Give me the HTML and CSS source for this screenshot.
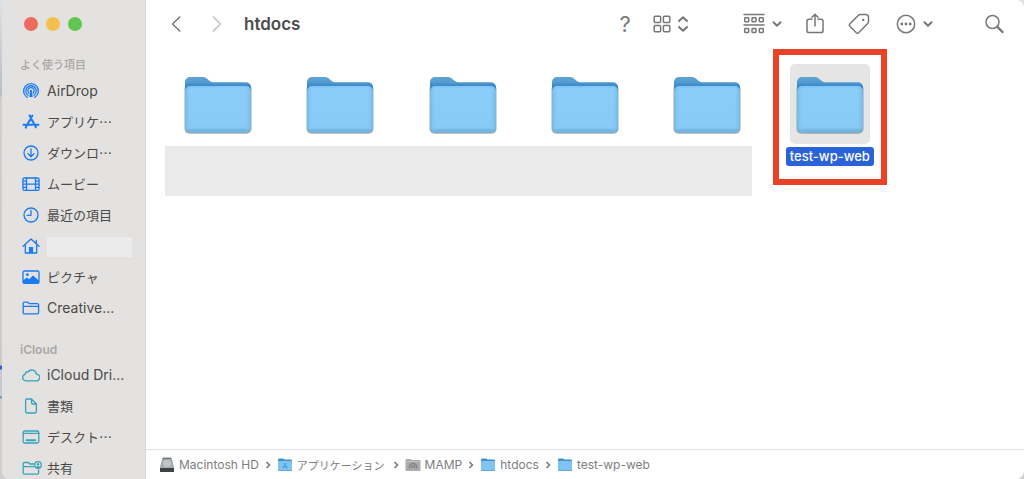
FILE: index.html
```html
<!DOCTYPE html>
<html lang="ja">
<head>
<meta charset="utf-8">
<title>htdocs</title>
<link rel="stylesheet" href="styles.css">
</head>
<body>
<svg class="defs" aria-hidden="true">
  <defs>
    <linearGradient id="back" x1="0" y1="0" x2="0" y2="1"><stop offset="0" stop-color="#5fa3d4"/><stop offset="0.18" stop-color="#549dd2"/><stop offset="0.34" stop-color="#3683c6"/></linearGradient>
    <linearGradient id="front" x1="0" y1="0" x2="0" y2="1"><stop offset="0" stop-color="#80c5f2"/><stop offset="0.08" stop-color="#8acdf8"/><stop offset="0.87" stop-color="#88cbf6"/><stop offset="0.9" stop-color="#78bdea"/><stop offset="1" stop-color="#6db3e2"/></linearGradient>
    <linearGradient id="edge"><stop offset="0" stop-color="#5fa9db" stop-opacity=".55"/><stop offset="0.1" stop-color="#88cbf6" stop-opacity="0"/><stop offset="0.9" stop-color="#88cbf6" stop-opacity="0"/><stop offset="1" stop-color="#5fa9db" stop-opacity=".55"/></linearGradient>
    <symbol id="folder" viewBox="0 0 70 60">
      <rect x="1.500" y="9" width="67" height="49.700" rx="5" fill="#7d878d" opacity=".7"/>
      <path d="M2 7a5 5 0 0 1 5-5h13c4 0 6 5 10 5.300h33a5 5 0 0 1 5 5V30H2z" fill="url(#back)"/>
      <path d="M2 16a5 5 0 0 1 5-5h56a5 5 0 0 1 5 5v36.500a5 5 0 0 1-5 5H7a5 5 0 0 1-5-5z" fill="url(#front)"/>
      <path d="M2 16a5 5 0 0 1 5-5h56a5 5 0 0 1 5 5v36.500a5 5 0 0 1-5 5H7a5 5 0 0 1-5-5z" fill="url(#edge)"/>
      <path d="M3 53h64" stroke="#a3d8f8" stroke-width="1" opacity=".6"/>
    </symbol>
    <symbol id="small-folder" viewBox="0 0 16 16">
      <path d="M1 2.500a1 1 0 0 1 1-1h4l1.500 1H14a1 1 0 0 1 1 1V8H1z" fill="#3f8fce"/>
      <path d="M1 4h14v9a1 1 0 0 1-1 1H2a1 1 0 0 1-1-1z" fill="#7fc4f1"/>
      <path d="M1.300 13.500h13.400" stroke="#65a9d8"/>
    </symbol>
    <symbol id="down" viewBox="0 0 10 10"><path d="M1.500 3.300 5 6.800l3.500-3.500" class="heavy"/></symbol>
    <symbol id="sep" viewBox="0 0 6 8"><path d="M1.500 1 4.500 4l-3 3" class="sep-line"/></symbol>
  </defs>
</svg>
<div class="desktop">
  <div class="window">
    <aside class="sidebar">
      <div class="lights">
        <button class="light red" aria-label="閉じる"></button>
        <button class="light yellow" aria-label="しまう"></button>
        <button class="light green" aria-label="拡大"></button>
      </div>
      <nav>
        <h2 class="heading ja-heading">よく使う項目</h2>
        <ul class="places">
          <li><a href="#" class="place"><svg class="icon" viewBox="0 0 18 18"><path d="M5.200 15.400a7.400 7.400 0 1 1 7.600 0M6 13.200a5.200 5.200 0 1 1 6 0M7.100 11.200a3.100 3.100 0 1 1 3.800 0"/><path class="solid" d="M9 7.800a1.300 1.300 0 0 1 .8 2.300l1 4.800H7.200l1-4.800A1.300 1.300 0 0 1 9 7.800z"/></svg><span>AirDrop</span></a></li>
          <li><a href="#" class="place"><svg class="icon thick" viewBox="0 0 18 18"><path d="M7.600 2.500 13.900 14.300M10.400 2.500 5.500 11.300M1.500 11.800h9M13 11.800h3.500M4.400 13.400l-.7 1.300"/></svg><span class="ja">アプリケ…</span></a></li>
          <li><a href="#" class="place"><svg class="icon" viewBox="0 0 18 18"><circle cx="9" cy="9" r="7"/><path d="M9 5v7.500M6 9.700l3 3 3-3"/></svg><span class="ja">ダウンロ…</span></a></li>
          <li><a href="#" class="place"><svg class="icon" viewBox="0 0 18 18"><rect x="1" y="3" width="16" height="12.400" rx="1.300"/><path d="M4.500 3v12.400M13.500 3v12.400M4.500 9.200h9M1 6.100h3.500M1 9.200h3.500M1 12.300h3.500M13.500 6.100H17M13.500 9.200H17M13.500 12.300H17"/></svg><span class="ja">ムービー</span></a></li>
          <li><a href="#" class="place"><svg class="icon" viewBox="0 0 18 18"><circle cx="9" cy="9" r="7"/><path d="M9 4.300V9.300H5"/></svg><span class="ja">最近の項目</span></a></li>
          <li><a href="#" class="place" aria-label="ホーム"><svg class="icon" viewBox="0 0 18 18"><path d="M1 9.200 9 2l8 7.200M3.300 8v8h11.400V8M14.300 6.500V3.300"/><path class="solid" d="M6.900 10h4.200v6H6.900z"/></svg><span class="redacted"></span></a></li>
          <li><a href="#" class="place"><svg class="icon" viewBox="0 0 18 18"><rect x="1" y="3" width="16" height="12.400" rx="1.500"/><path class="solid" d="M1 12.500 4.800 9.500l2.200 1.800 4-3.800 6 5v2.800H1z"/><circle class="solid" cx="5.400" cy="6.700" r="1.400"/></svg><span class="ja">ピクチャ</span></a></li>
          <li><a href="#" class="place"><svg class="icon" viewBox="0 0 18 18"><path d="M1.200 13.500V4.500a1.300 1.300 0 0 1 1.300-1.300h3.300l1.500 1.500h8a1.300 1.300 0 0 1 1.300 1.300v7.500a1.300 1.300 0 0 1-1.300 1.300H2.500a1.300 1.300 0 0 1-1.300-1.300zM1.200 7.300h15.400"/></svg><span>Creative...</span></a></li>
        </ul>
        <h2 class="heading cloud-heading">iCloud</h2>
        <ul class="places teal">
          <li><a href="#" class="place"><svg class="icon" viewBox="0 0 18 18"><path d="M3.800 14.800a3.300 3.300 0 0 1-.6-6.500 2.500 2.500 0 0 1 3-2.500 4.600 4.600 0 0 1 8.200 2.400 3.300 3.300 0 0 1 .2 6.600z"/></svg><span>iCloud Dri...</span></a></li>
          <li><a href="#" class="place"><svg class="icon" viewBox="0 0 18 18"><path d="M9.500 2H5a1.400 1.400 0 0 0-1.400 1.400v11.200A1.400 1.400 0 0 0 5 16h8a1.400 1.400 0 0 0 1.400-1.400V7zM9.500 2v3.600A1.400 1.400 0 0 0 10.900 7h3.500"/></svg><span class="ja">書類</span></a></li>
          <li><a href="#" class="place"><svg class="icon" viewBox="0 0 18 18"><rect x="1.200" y="3" width="15.600" height="12" rx="1.500"/><path d="M1.200 5.400h15.600"/><path class="bar" d="M4.700 12.200h8.600"/></svg><span class="ja">デスクト…</span></a></li>
          <li><a href="#" class="place"><svg class="icon shared" viewBox="0 0 20 18"><path d="M11.500 5H7.800L6.300 3.500H2.500A1.300 1.300 0 0 0 1.200 4.800v9a1.300 1.300 0 0 0 1.300 1.300h12.800a1.300 1.300 0 0 0 1.300-1.300v-3M1.200 7.700h10.500"/><circle cx="16" cy="6" r="3.300"/><circle class="solid" cx="16" cy="5.200" r="1.200"/><path class="solid" d="M13.800 8.200q2.200-2.400 4.400 0L16 9.300z"/></svg><span class="ja">共有</span></a></li>
        </ul>
      </nav>
    </aside>
    <main class="main">
      <header class="toolbar">
        <button class="tool" aria-label="戻る"><svg class="nav-icon" viewBox="0 0 12 18"><path d="M9.800 2 2.500 9l7.300 7"/></svg></button>
        <button class="tool forward" aria-label="進む"><svg class="nav-icon" viewBox="0 0 12 18"><path d="M2.200 2 9.500 9l-7.300 7"/></svg></button>
        <h1 class="title">htdocs</h1>
        <button class="tool help">?</button>
        <button class="tool view" aria-label="表示"><svg class="i18" viewBox="0 0 18 18"><rect x="1.200" y="1.200" width="6.400" height="6.400" rx="1"/><rect x="10.400" y="1.200" width="6.400" height="6.400" rx="1"/><rect x="1.200" y="10.400" width="6.400" height="6.400" rx="1"/><rect x="10.400" y="10.400" width="6.400" height="6.400" rx="1"/></svg><svg class="updown" viewBox="0 0 10 18"><path class="heavy" d="M1 6l4-3.700L9 6M1 12l4 3.700L9 12"/></svg></button>
        <button class="tool arrange" aria-label="グループ"><svg class="i22" viewBox="0 0 22 22"><path d="M1 1.500h20M1 12h20"/><rect x="1.700" y="4.700" width="4" height="4" rx=".7"/><rect x="9" y="4.700" width="4" height="4" rx=".7"/><rect x="16.300" y="4.700" width="4" height="4" rx=".7"/><rect x="1.700" y="15.500" width="4" height="4" rx=".7"/><rect x="9" y="15.500" width="4" height="4" rx=".7"/><rect x="16.300" y="15.500" width="4" height="4" rx=".7"/></svg><svg class="chev"><use href="#down"/></svg></button>
        <button class="tool share" aria-label="共有"><svg class="i22" viewBox="0 0 22 22"><path d="M8 6.300H4.800A1.800 1.800 0 0 0 3 8.100v9.600a1.800 1.800 0 0 0 1.800 1.800h12.400a1.800 1.800 0 0 0 1.800-1.800V8.100a1.800 1.800 0 0 0-1.800-1.800H14M11 13V1.500M8 4.200 11 1.200l3 3"/></svg></button>
        <button class="tool tag" aria-label="タグ"><svg class="i22" viewBox="0 0 22 22"><path d="M12.500 1.500h5.200a2.800 2.800 0 0 1 2.800 2.800v4.200a2.800 2.800 0 0 1-.8 2l-9.100 9.300a1.600 1.600 0 0 1-2.300 0L1.800 13.300a1.600 1.600 0 0 1 0-2.300l8.700-8.700a2.800 2.800 0 0 1 2-.8z"/><circle class="solid" cx="15.200" cy="6.900" r="1.200"/></svg></button>
        <button class="tool more" aria-label="その他"><svg class="i20" viewBox="0 0 20 20"><circle cx="10" cy="10" r="8.700"/><circle class="solid" cx="5.800" cy="10" r="1.400"/><circle class="solid" cx="10" cy="10" r="1.400"/><circle class="solid" cx="14.200" cy="10" r="1.400"/></svg><svg class="chev"><use href="#down"/></svg></button>
        <button class="tool search" aria-label="検索"><svg class="i20" viewBox="0 0 20 20"><circle cx="8.500" cy="8" r="6.500"/><path class="handle" d="M13.200 12.700l5.300 5.300"/></svg></button>
      </header>
      <section class="files" aria-label="ファイル">
        <div class="cell"><svg class="folder"><use href="#folder"/></svg></div>
        <div class="cell"><svg class="folder"><use href="#folder"/></svg></div>
        <div class="cell"><svg class="folder"><use href="#folder"/></svg></div>
        <div class="cell"><svg class="folder"><use href="#folder"/></svg></div>
        <div class="cell"><svg class="folder"><use href="#folder"/></svg></div>
        <div class="cell chosen"><div class="thumb"><svg class="folder"><use href="#folder"/></svg></div><span class="name">test-wp-web</span><div class="frame"></div></div>
        <div class="mask"></div>
      </section>
      <footer class="path">
        <span class="crumb"><svg class="crumb-icon" viewBox="0 0 16 16"><path d="M3.500 1h9L15 11v3.500H1V11z" fill="#878b8d"/><path d="M3.500 1h9L15 11H1z" fill="#a6acae"/><path d="M1 11h14v3.500a.5.5 0 0 1-.5.500h-13a.5.5 0 0 1-.5-.500z" fill="#3d4246"/><ellipse cx="8" cy="6.500" rx="4" ry="3.500" fill="#c0c6c8"/><path d="M4 1.200h8" stroke="#55595c"/></svg>Macintosh HD</span>
        <svg class="sep"><use href="#sep"/></svg>
        <span class="crumb"><svg class="crumb-icon" viewBox="0 0 16 16"><use href="#small-folder"/><path d="M8.300 6 6 11.500M7.700 6l2.300 5.500M5.300 9.800h5.400" fill="none" stroke="#4b9ad4" stroke-width=".9"/></svg><span class="ja-crumb">アプリケーション</span></span>
        <svg class="sep"><use href="#sep"/></svg>
        <span class="crumb"><svg class="crumb-icon" viewBox="0 0 16 16"><path d="M.5 3a1 1 0 0 1 1-1h4L7 3h7.500a1 1 0 0 1 1 1v9a1 1 0 0 1-1 1h-13a1 1 0 0 1-1-1z" fill="#acacac"/><path d="M.5 4.500h15" stroke="#bebebe"/><path d="M4.500 11.500c-1-3 .8-5 3.500-5s4.500 2 3.500 5M6.500 11.500V9h3v2.500" fill="none" stroke="#858585" stroke-width="1.400"/></svg>MAMP</span>
        <svg class="sep"><use href="#sep"/></svg>
        <span class="crumb"><svg class="crumb-icon"><use href="#small-folder"/></svg>htdocs</span>
        <svg class="sep"><use href="#sep"/></svg>
        <span class="crumb"><svg class="crumb-icon"><use href="#small-folder"/></svg>test-wp-web</span>
      </footer>
    </main>
  </div>
</div>
</body>
</html>
```
FILE: styles.css
```css
* { box-sizing: border-box; }
body {
  margin: 0;
  font-family: Inter, "Noto Sans CJK JP", sans-serif;
  color: #4a4948;
}
.defs { position: absolute; width: 0; height: 0; }
.desktop {
  height: 100vh;
  display: flex;
  padding-left: 2px;
  background: linear-gradient(#dfe3e7 0, #b7bec5 95px, #cfcfcf 98px, #cbcbcb 365px, #2d62c9 366px, #2d62c9 369px, #c5c9d2 370px, #c5c9d2 396px, #4d77c8 397px, #cfcfcf 399px);
}
.window {
  flex: 1;
  display: flex;
  min-width: 0;
  overflow: hidden;
  border-radius: 8px;
  background: #fff;
}
.sidebar {
  flex: none;
  width: 144px;
  padding: 17px 0 0 18px;
  overflow: hidden;
  background: #e4e2e0;
  border-right: 1px solid #dad8d6;
}
.lights { display: flex; gap: 8px; padding-left: 4px; }
.light { width: 14px; height: 14px; padding: 0; border: 0; border-radius: 50%; }
.red { background: #ed6a5f; }
.yellow { background: #f5bf4f; }
.green { background: #61c554; }
.heading { margin: 0; font-size: 12px; line-height: 16px; font-weight: 600; color: #a9a7a5; }
.ja-heading { margin-top: 25px; font-family: "Noto Sans CJK JP", sans-serif; font-size: 11px; font-weight: 500; }
.cloud-heading { margin-top: 19px; }
.places { margin: 3px 0 0; padding: 0; list-style: none; }
.teal { margin-top: 1px; }
.place {
  display: flex;
  align-items: center;
  gap: 7px;
  height: 31px;
  padding-left: 2px;
  font-size: 14px;
  color: inherit;
  text-decoration: none;
  white-space: nowrap;
}
.ja { font-family: "Noto Sans CJK JP", sans-serif; font-size: 13px; }
.icon {
  flex: none;
  width: 18px;
  height: 18px;
  fill: none;
  stroke: #1a7af5;
  stroke-width: 1.3;
  stroke-linecap: round;
  stroke-linejoin: round;
}
.icon .solid { fill: #1a7af5; stroke: none; }
.thick { stroke-width: 2; }
.teal .icon { stroke: #36a3b8; }
.teal .icon .solid { fill: #36a3b8; }
.icon .bar { stroke-width: 2; }
.shared { width: 20px; margin-right: -2px; }
.redacted { width: 85px; height: 20px; margin-top: 2px; background: #ebebeb; }

.main { flex: 1; min-width: 0; display: flex; flex-direction: column; }
.toolbar {
  flex: none;
  display: flex;
  align-items: center;
  height: 48px;
  padding: 0 20px 0 24px;
}
.tool {
  flex: none;
  display: flex;
  align-items: center;
  gap: 7px;
  padding: 0;
  border: 0;
  background: none;
  font: inherit;
  color: #7a7a7a;
}
.tool svg { fill: none; stroke: #777; stroke-width: 1.5; stroke-linecap: round; stroke-linejoin: round; }
.tool svg .solid { fill: #777; stroke: none; }
.tool .handle { stroke-width: 2.4; }
.heavy { stroke-width: 2; }
.nav-icon { width: 12px; height: 18px; }
.forward { margin-left: 29px; }
.tool.forward svg { stroke: #c2c2c2; }
.title { flex: 1; margin: 0 0 0 21px; font-size: 17px; line-height: 24px; font-weight: 600; color: #4c4c4c; }
.help { width: 14px; justify-content: center; font-size: 22px; line-height: 24px; }
.view { margin-left: 21px; }
.arrange { margin-left: 55px; }
.share { margin-left: 22px; }
.tag { margin-left: 22px; }
.more { margin-left: 26px; }
.search { margin-left: 51px; }
.i18 { width: 18px; height: 18px; }
.i20 { width: 20px; height: 20px; }
.i22 { width: 22px; height: 22px; }
.updown { width: 10px; height: 18px; }
.chev { width: 10px; height: 10px; }

.files {
  flex: 1;
  display: grid;
  grid-template-columns: repeat(6, minmax(0, 1fr));
  grid-template-rows: 82px 50px;
  max-width: 745px;
  padding: 16px 0 0 11px;
}
.cell { display: flex; flex-direction: column; align-items: center; padding-top: 11px; }
.folder { flex: none; width: 70px; height: 60px; }
.chosen { position: relative; padding-top: 0; }
.thumb { flex: none; width: 80px; height: 80px; padding: 11px 5px; border-radius: 5px; background: #e5e5e5; }
.name {
  flex: none;
  margin-top: 3px;
  padding: 0 4px;
  border-radius: 3px;
  background: #2962d9;
  color: #fff;
  font-size: 13px;
  line-height: 19px;
  font-weight: 500;
  white-space: nowrap;
}
.frame { position: absolute; top: -15px; left: 4px; right: 4px; height: 136px; border: 6px solid #ea4127; }
.mask { grid-column: 1 / 6; margin: 0 17px 0 8px; background: #eaeaea; }

.path {
  flex: none;
  display: flex;
  align-items: center;
  gap: 6px;
  height: 30px;
  padding-left: 13px;
  border-top: 1px solid #e2e2e2;
  font-size: 12px;
  color: #7d7d7d;
  white-space: nowrap;
}
.crumb { display: flex; align-items: center; gap: 4px; }
.crumb-icon { flex: none; width: 16px; height: 16px; }
.ja-crumb { padding-right: 2px; font-family: "Noto Sans CJK JP", sans-serif; font-size: 11px; line-height: 16px; }
.sep { width: 6px; height: 8px; }
.sep-line { fill: none; stroke: #777; stroke-width: 1.5; }
```
